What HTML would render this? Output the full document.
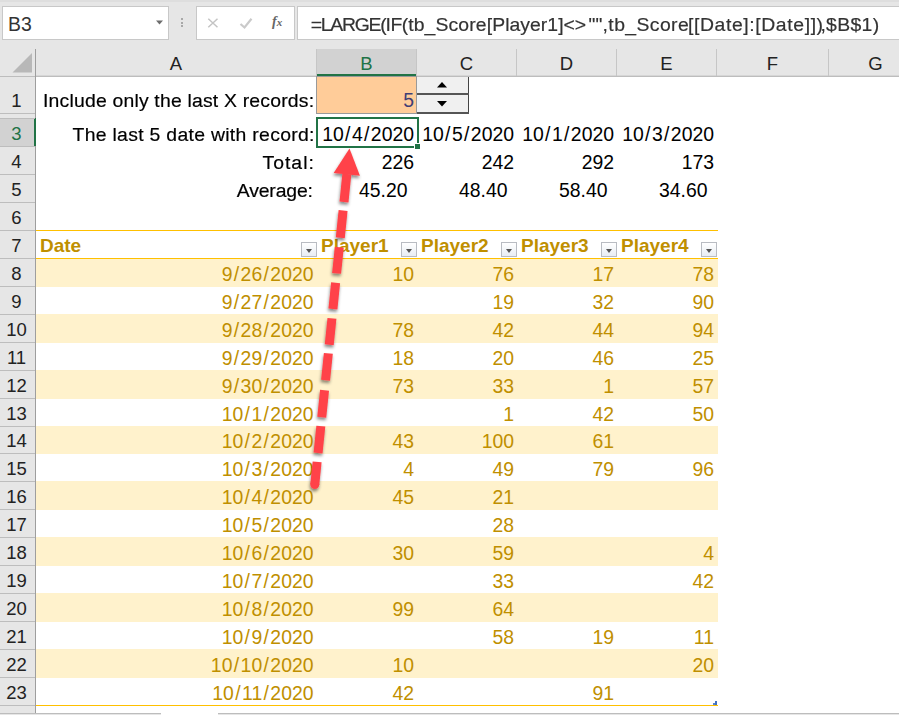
<!DOCTYPE html>
<html><head><meta charset="utf-8"><style>
html,body{margin:0;padding:0;}
body{width:899px;height:715px;overflow:hidden;position:relative;background:#fff;font-family:"Liberation Sans",sans-serif;}
.t{position:absolute;white-space:pre;}
.sl{padding:0 1.4px;}
.dd{position:absolute;width:16px;height:15px;box-sizing:border-box;border:1px solid #b9bcc2;background:linear-gradient(#ffffff,#e9edf3);}
.dd::after{content:"";position:absolute;left:4px;top:5.5px;border-left:3.5px solid transparent;border-right:3.5px solid transparent;border-top:4px solid #555;}
</style></head><body>
<div style="position:absolute;left:0px;top:0px;width:899px;height:49px;background:#e6e6e6;"></div>
<div style="position:absolute;left:0px;top:0px;width:899px;height:2px;background:#dedede;"></div>
<div style="position:absolute;left:2px;top:6px;width:167px;height:34px;background:#fff;border:1px solid #c8c8c8;box-sizing:border-box;"></div>
<div class="t" style="left:8px;top:12.28px;font-size:19.4px;line-height:24px;color:#333;font-weight:normal;letter-spacing:0px;">B3</div>
<svg style="position:absolute;left:155px;top:19px" width="9" height="7"><polygon points="1,1.5 8,1.5 4.5,5.5" fill="#6d6d6d"/></svg>
<div style="position:absolute;left:181px;top:18px;width:2px;height:2px;background:#a8a8a8;"></div>
<div style="position:absolute;left:181px;top:21.6px;width:2px;height:2px;background:#a8a8a8;"></div>
<div style="position:absolute;left:181px;top:25.2px;width:2px;height:2px;background:#a8a8a8;"></div>
<div style="position:absolute;left:196px;top:6px;width:99px;height:34px;background:#fff;border:1px solid #c8c8c8;box-sizing:border-box;"></div>
<svg style="position:absolute;left:206px;top:16px" width="14" height="14"><path d="M2.3,2.8 L11.5,11.2 M11.5,2.8 L2.3,11.2" stroke="#c4c4c4" stroke-width="1.5" fill="none"/></svg>
<svg style="position:absolute;left:238px;top:16px" width="16" height="14"><path d="M2.5,8 L6.5,11.5 L13.5,2.8" stroke="#cacaca" stroke-width="2.2" fill="none"/></svg>
<div style="position:absolute;left:272px;top:11px;font-family:'Liberation Serif',serif;font-style:italic;font-weight:bold;color:#666;white-space:pre;line-height:20px;"><span style="font-size:14px">f</span><span style="font-size:11px;margin-left:0px">x</span></div>
<div style="position:absolute;left:297px;top:6px;width:610px;height:34px;background:#fff;border:1px solid #c8c8c8;box-sizing:border-box;"></div>
<div class="t" style="left:310.7px;top:12.28px;font-size:19.4px;line-height:24px;color:#333;font-weight:normal;letter-spacing:-1.25px;transform:scaleY(0.95);transform-origin:0 18.72px;-webkit-text-stroke:0.2px currentColor;">=LARGE(</div>
<div class="t" style="left:385.5px;top:12.28px;font-size:19.4px;line-height:24px;color:#333;font-weight:normal;letter-spacing:-0.45px;transform:scaleY(0.95);transform-origin:0 18.72px;-webkit-text-stroke:0.2px currentColor;">IF(</div>
<div class="t" style="left:408.2px;top:12.28px;font-size:19.4px;line-height:24px;color:#333;font-weight:normal;letter-spacing:0.114px;transform:scaleY(0.95);transform-origin:0 18.72px;-webkit-text-stroke:0.2px currentColor;">tb_Score</div>
<div class="t" style="left:486.8px;top:12.28px;font-size:19.4px;line-height:24px;color:#333;font-weight:normal;letter-spacing:0.025px;transform:scaleY(0.95);transform-origin:0 18.72px;-webkit-text-stroke:0.2px currentColor;">[Player1]</div>
<div class="t" style="left:563.5px;top:12.28px;font-size:19.4px;line-height:24px;color:#333;font-weight:normal;letter-spacing:0.0px;transform:scaleY(0.95);transform-origin:0 18.72px;-webkit-text-stroke:0.2px currentColor;">&lt;&gt;</div>
<div class="t" style="left:588.6px;top:12.28px;font-size:19.4px;line-height:24px;color:#333;font-weight:normal;letter-spacing:0.0px;transform:scaleY(0.95);transform-origin:0 18.72px;-webkit-text-stroke:0.2px currentColor;">""</div>
<div class="t" style="left:602.6px;top:12.28px;font-size:19.4px;line-height:24px;color:#333;font-weight:normal;letter-spacing:0.388px;transform:scaleY(0.95);transform-origin:0 18.72px;-webkit-text-stroke:0.2px currentColor;">,tb_Score</div>
<div class="t" style="left:687.9px;top:12.28px;font-size:19.4px;line-height:24px;color:#333;font-weight:normal;letter-spacing:0.607px;transform:scaleY(0.95);transform-origin:0 18.72px;-webkit-text-stroke:0.2px currentColor;">[[Date]:[Date]])</div>
<div class="t" style="left:820.4px;top:12.28px;font-size:19.4px;line-height:24px;color:#333;font-weight:normal;letter-spacing:0.32px;transform:scaleY(0.95);transform-origin:0 18.72px;-webkit-text-stroke:0.2px currentColor;">,$B$1)</div>
<div style="position:absolute;left:0px;top:49px;width:899px;height:27px;background:#e6e6e6;"></div>
<div style="position:absolute;left:0px;top:76px;width:899px;height:1px;background:#bdbdbd;"></div>
<div style="position:absolute;left:36px;top:75px;width:863px;height:1px;background:#d6d6d6;"></div>
<svg style="position:absolute;left:0;top:49px" width="35" height="27"><polygon points="12.5,23.5 32,4 32,23.5" fill="#b8b8b8"/></svg>
<div style="position:absolute;left:316px;top:49px;width:101px;height:27px;background:#d2d2d2;"></div>
<div style="position:absolute;left:316px;top:74px;width:101px;height:2px;background:#217346;"></div>
<div style="position:absolute;left:316px;top:49px;width:1px;height:27px;background:#c6c6c6;"></div>
<div class="t" style="left:-74.0px;width:500px;text-align:center;top:52.09px;font-size:18.5px;line-height:24px;color:#222;font-weight:normal;letter-spacing:0px;">A</div>
<div style="position:absolute;left:416px;top:49px;width:1px;height:27px;background:#c6c6c6;"></div>
<div class="t" style="left:116.5px;width:500px;text-align:center;top:52.09px;font-size:18.5px;line-height:24px;color:#217346;font-weight:normal;letter-spacing:0px;">B</div>
<div style="position:absolute;left:516px;top:49px;width:1px;height:27px;background:#c6c6c6;"></div>
<div class="t" style="left:216.5px;width:500px;text-align:center;top:52.09px;font-size:18.5px;line-height:24px;color:#222;font-weight:normal;letter-spacing:0px;">C</div>
<div style="position:absolute;left:616px;top:49px;width:1px;height:27px;background:#c6c6c6;"></div>
<div class="t" style="left:316.5px;width:500px;text-align:center;top:52.09px;font-size:18.5px;line-height:24px;color:#222;font-weight:normal;letter-spacing:0px;">D</div>
<div style="position:absolute;left:716px;top:49px;width:1px;height:27px;background:#c6c6c6;"></div>
<div class="t" style="left:416.5px;width:500px;text-align:center;top:52.09px;font-size:18.5px;line-height:24px;color:#222;font-weight:normal;letter-spacing:0px;">E</div>
<div style="position:absolute;left:828px;top:49px;width:1px;height:27px;background:#c6c6c6;"></div>
<div class="t" style="left:522.5px;width:500px;text-align:center;top:52.09px;font-size:18.5px;line-height:24px;color:#222;font-weight:normal;letter-spacing:0px;">F</div>
<div style="position:absolute;left:940px;top:49px;width:1px;height:27px;background:#c6c6c6;"></div>
<div class="t" style="left:625.5px;width:500px;text-align:center;top:52.09px;font-size:18.5px;line-height:24px;color:#222;font-weight:normal;letter-spacing:0px;">G</div>
<div style="position:absolute;left:35px;top:49px;width:1px;height:27px;background:#9e9e9e;"></div>
<div style="position:absolute;left:0px;top:77px;width:35px;height:638px;background:#e6e6e6;"></div>
<div style="position:absolute;left:35px;top:49px;width:1px;height:666px;background:#9e9e9e;"></div>
<div style="position:absolute;left:0px;top:113px;width:35px;height:1px;background:#bdbdbd;"></div>
<div class="t" style="left:-233.5px;width:500px;text-align:center;top:89.09px;font-size:18.5px;line-height:24px;color:#222;font-weight:normal;letter-spacing:0px;">1</div>
<div style="position:absolute;left:0px;top:119px;width:35px;height:27px;background:#d2d2d2;"></div>
<div style="position:absolute;left:34px;top:118px;width:2px;height:28px;background:#217346;"></div>
<div style="position:absolute;left:0px;top:146px;width:35px;height:1px;background:#bdbdbd;"></div>
<div class="t" style="left:-233.5px;width:500px;text-align:center;top:122.09px;font-size:18.5px;line-height:24px;color:#217346;font-weight:normal;letter-spacing:0px;">3</div>
<div style="position:absolute;left:0px;top:174px;width:35px;height:1px;background:#bdbdbd;"></div>
<div class="t" style="left:-233.5px;width:500px;text-align:center;top:150.09px;font-size:18.5px;line-height:24px;color:#222;font-weight:normal;letter-spacing:0px;">4</div>
<div style="position:absolute;left:0px;top:202px;width:35px;height:1px;background:#bdbdbd;"></div>
<div class="t" style="left:-233.5px;width:500px;text-align:center;top:178.09px;font-size:18.5px;line-height:24px;color:#222;font-weight:normal;letter-spacing:0px;">5</div>
<div style="position:absolute;left:0px;top:230px;width:35px;height:1px;background:#bdbdbd;"></div>
<div class="t" style="left:-233.5px;width:500px;text-align:center;top:206.09px;font-size:18.5px;line-height:24px;color:#222;font-weight:normal;letter-spacing:0px;">6</div>
<div style="position:absolute;left:0px;top:258px;width:35px;height:1px;background:#bdbdbd;"></div>
<div class="t" style="left:-233.5px;width:500px;text-align:center;top:234.09px;font-size:18.5px;line-height:24px;color:#222;font-weight:normal;letter-spacing:0px;">7</div>
<div style="position:absolute;left:0px;top:286px;width:35px;height:1px;background:#bdbdbd;"></div>
<div class="t" style="left:-233.5px;width:500px;text-align:center;top:262.09px;font-size:18.5px;line-height:24px;color:#222;font-weight:normal;letter-spacing:0px;">8</div>
<div style="position:absolute;left:0px;top:314px;width:35px;height:1px;background:#bdbdbd;"></div>
<div class="t" style="left:-233.5px;width:500px;text-align:center;top:290.09px;font-size:18.5px;line-height:24px;color:#222;font-weight:normal;letter-spacing:0px;">9</div>
<div style="position:absolute;left:0px;top:342px;width:35px;height:1px;background:#bdbdbd;"></div>
<div class="t" style="left:-233.5px;width:500px;text-align:center;top:318.09px;font-size:18.5px;line-height:24px;color:#222;font-weight:normal;letter-spacing:0px;">10</div>
<div style="position:absolute;left:0px;top:370px;width:35px;height:1px;background:#bdbdbd;"></div>
<div class="t" style="left:-233.5px;width:500px;text-align:center;top:346.09px;font-size:18.5px;line-height:24px;color:#222;font-weight:normal;letter-spacing:0px;">11</div>
<div style="position:absolute;left:0px;top:398px;width:35px;height:1px;background:#bdbdbd;"></div>
<div class="t" style="left:-233.5px;width:500px;text-align:center;top:374.09px;font-size:18.5px;line-height:24px;color:#222;font-weight:normal;letter-spacing:0px;">12</div>
<div style="position:absolute;left:0px;top:426px;width:35px;height:1px;background:#bdbdbd;"></div>
<div class="t" style="left:-233.5px;width:500px;text-align:center;top:402.09px;font-size:18.5px;line-height:24px;color:#222;font-weight:normal;letter-spacing:0px;">13</div>
<div style="position:absolute;left:0px;top:453px;width:35px;height:1px;background:#bdbdbd;"></div>
<div class="t" style="left:-233.5px;width:500px;text-align:center;top:429.09px;font-size:18.5px;line-height:24px;color:#222;font-weight:normal;letter-spacing:0px;">14</div>
<div style="position:absolute;left:0px;top:481px;width:35px;height:1px;background:#bdbdbd;"></div>
<div class="t" style="left:-233.5px;width:500px;text-align:center;top:457.09px;font-size:18.5px;line-height:24px;color:#222;font-weight:normal;letter-spacing:0px;">15</div>
<div style="position:absolute;left:0px;top:509px;width:35px;height:1px;background:#bdbdbd;"></div>
<div class="t" style="left:-233.5px;width:500px;text-align:center;top:485.09px;font-size:18.5px;line-height:24px;color:#222;font-weight:normal;letter-spacing:0px;">16</div>
<div style="position:absolute;left:0px;top:537px;width:35px;height:1px;background:#bdbdbd;"></div>
<div class="t" style="left:-233.5px;width:500px;text-align:center;top:513.09px;font-size:18.5px;line-height:24px;color:#222;font-weight:normal;letter-spacing:0px;">17</div>
<div style="position:absolute;left:0px;top:565px;width:35px;height:1px;background:#bdbdbd;"></div>
<div class="t" style="left:-233.5px;width:500px;text-align:center;top:541.09px;font-size:18.5px;line-height:24px;color:#222;font-weight:normal;letter-spacing:0px;">18</div>
<div style="position:absolute;left:0px;top:593px;width:35px;height:1px;background:#bdbdbd;"></div>
<div class="t" style="left:-233.5px;width:500px;text-align:center;top:569.09px;font-size:18.5px;line-height:24px;color:#222;font-weight:normal;letter-spacing:0px;">19</div>
<div style="position:absolute;left:0px;top:621px;width:35px;height:1px;background:#bdbdbd;"></div>
<div class="t" style="left:-233.5px;width:500px;text-align:center;top:597.09px;font-size:18.5px;line-height:24px;color:#222;font-weight:normal;letter-spacing:0px;">20</div>
<div style="position:absolute;left:0px;top:649px;width:35px;height:1px;background:#bdbdbd;"></div>
<div class="t" style="left:-233.5px;width:500px;text-align:center;top:625.09px;font-size:18.5px;line-height:24px;color:#222;font-weight:normal;letter-spacing:0px;">21</div>
<div style="position:absolute;left:0px;top:677px;width:35px;height:1px;background:#bdbdbd;"></div>
<div class="t" style="left:-233.5px;width:500px;text-align:center;top:653.09px;font-size:18.5px;line-height:24px;color:#222;font-weight:normal;letter-spacing:0px;">22</div>
<div style="position:absolute;left:0px;top:705px;width:35px;height:1px;background:#bdbdbd;"></div>
<div class="t" style="left:-233.5px;width:500px;text-align:center;top:681.09px;font-size:18.5px;line-height:24px;color:#222;font-weight:normal;letter-spacing:0px;">23</div>
<div style="position:absolute;left:0px;top:118px;width:35px;height:1px;background:#bdbdbd;"></div>
<div style="position:absolute;left:0px;top:713px;width:161px;height:2px;background:#e6e6e6;border-top:1px solid #bdbdbd;box-sizing:border-box;"></div>
<div style="position:absolute;left:218px;top:713px;width:700px;height:2px;background:#e6e6e6;border-top:1px solid #bdbdbd;box-sizing:border-box;"></div>
<div style="position:absolute;left:36px;top:77px;width:863px;height:636px;background:#fff;"></div>
<div style="position:absolute;left:316px;top:76px;width:101px;height:38px;background:#9a9a9a;"></div>
<div style="position:absolute;left:317px;top:77px;width:99px;height:36px;background:#ffcc99;"></div>
<div class="t" style="left:-86px;width:500px;text-align:right;top:88.28px;font-size:19.4px;line-height:24px;color:#3f3f76;font-weight:normal;letter-spacing:0px;">5</div>
<div style="position:absolute;left:417px;top:77px;width:52px;height:36px;background:#f0f0f0;"></div>
<div style="position:absolute;left:468px;top:77px;width:1px;height:37px;background:#444;"></div>
<div style="position:absolute;left:417px;top:112px;width:52px;height:2px;background:#555;"></div>
<div style="position:absolute;left:417px;top:93px;width:52px;height:2px;background:#555;"></div>
<svg style="position:absolute;left:436px;top:81px" width="12" height="8"><polygon points="1,6.5 11,6.5 6,1" fill="#000"/></svg>
<svg style="position:absolute;left:436px;top:100px" width="12" height="8"><polygon points="1,1 11,1 6,6.5" fill="#000"/></svg>
<div class="t" style="left:43px;top:88.28px;font-size:19.4px;line-height:24px;color:#000;font-weight:normal;letter-spacing:0.19px;transform:scaleY(0.94);transform-origin:0 18.72px;-webkit-text-stroke:0.2px currentColor;">Include only the last X records:</div>
<div class="t" style="left:72.5px;top:122.28px;font-size:19.4px;line-height:24px;color:#000;font-weight:normal;letter-spacing:0.3px;transform:scaleY(0.94);transform-origin:0 18.72px;-webkit-text-stroke:0.2px currentColor;">The last 5 date with record:</div>
<div class="t" style="left:262.5px;top:150.28px;font-size:19.4px;line-height:24px;color:#000;font-weight:normal;letter-spacing:1.0px;transform:scaleY(0.94);transform-origin:0 18.72px;-webkit-text-stroke:0.2px currentColor;">Total:</div>
<div class="t" style="left:236.7px;top:178.28px;font-size:19.4px;line-height:24px;color:#000;font-weight:normal;letter-spacing:-0.14px;transform:scaleY(0.94);transform-origin:0 18.72px;-webkit-text-stroke:0.2px currentColor;">Average:</div>
<div class="t" style="left:-86px;width:500px;text-align:right;top:122.28px;font-size:19.4px;line-height:24px;color:#000;font-weight:normal;letter-spacing:0px;">10<span class="sl">/</span>4<span class="sl">/</span>2020</div>
<div class="t" style="left:-86px;width:500px;text-align:right;top:150.28px;font-size:19.4px;line-height:24px;color:#000;font-weight:normal;letter-spacing:0px;">226</div>
<div class="t" style="left:-92.5px;width:500px;text-align:right;top:178.28px;font-size:19.4px;line-height:24px;color:#000;font-weight:normal;letter-spacing:0px;">45.20</div>
<div class="t" style="left:14px;width:500px;text-align:right;top:122.28px;font-size:19.4px;line-height:24px;color:#000;font-weight:normal;letter-spacing:0px;">10<span class="sl">/</span>5<span class="sl">/</span>2020</div>
<div class="t" style="left:14px;width:500px;text-align:right;top:150.28px;font-size:19.4px;line-height:24px;color:#000;font-weight:normal;letter-spacing:0px;">242</div>
<div class="t" style="left:7.5px;width:500px;text-align:right;top:178.28px;font-size:19.4px;line-height:24px;color:#000;font-weight:normal;letter-spacing:0px;">48.40</div>
<div class="t" style="left:114px;width:500px;text-align:right;top:122.28px;font-size:19.4px;line-height:24px;color:#000;font-weight:normal;letter-spacing:0px;">10<span class="sl">/</span>1<span class="sl">/</span>2020</div>
<div class="t" style="left:114px;width:500px;text-align:right;top:150.28px;font-size:19.4px;line-height:24px;color:#000;font-weight:normal;letter-spacing:0px;">292</div>
<div class="t" style="left:107.5px;width:500px;text-align:right;top:178.28px;font-size:19.4px;line-height:24px;color:#000;font-weight:normal;letter-spacing:0px;">58.40</div>
<div class="t" style="left:214px;width:500px;text-align:right;top:122.28px;font-size:19.4px;line-height:24px;color:#000;font-weight:normal;letter-spacing:0px;">10<span class="sl">/</span>3<span class="sl">/</span>2020</div>
<div class="t" style="left:214px;width:500px;text-align:right;top:150.28px;font-size:19.4px;line-height:24px;color:#000;font-weight:normal;letter-spacing:0px;">173</div>
<div class="t" style="left:207.5px;width:500px;text-align:right;top:178.28px;font-size:19.4px;line-height:24px;color:#000;font-weight:normal;letter-spacing:0px;">34.60</div>
<div style="position:absolute;left:316px;top:117px;width:102.5px;height:31px;border:2px solid #217346;box-sizing:border-box;"></div>
<div style="position:absolute;left:415px;top:144px;width:5px;height:5px;background:#217346;border:1px solid #fff;box-sizing:content-box;left:414px;top:143px;"></div>
<div style="position:absolute;left:36px;top:230px;width:682px;height:1px;background:#ffc000;"></div>
<div style="position:absolute;left:36px;top:258px;width:682px;height:1px;background:#ffc000;"></div>
<div style="position:absolute;left:36px;top:258px;width:682px;height:29px;background:#fff2cc;"></div>
<div style="position:absolute;left:36px;top:314px;width:682px;height:29px;background:#fff2cc;"></div>
<div style="position:absolute;left:36px;top:370px;width:682px;height:29px;background:#fff2cc;"></div>
<div style="position:absolute;left:36px;top:426px;width:682px;height:28px;background:#fff2cc;"></div>
<div style="position:absolute;left:36px;top:481px;width:682px;height:29px;background:#fff2cc;"></div>
<div style="position:absolute;left:36px;top:537px;width:682px;height:29px;background:#fff2cc;"></div>
<div style="position:absolute;left:36px;top:593px;width:682px;height:29px;background:#fff2cc;"></div>
<div style="position:absolute;left:36px;top:649px;width:682px;height:29px;background:#fff2cc;"></div>
<div style="position:absolute;left:36px;top:705px;width:682px;height:1px;background:#ffc000;"></div>
<div style="position:absolute;left:36px;top:258px;width:682px;height:1px;background:#ffc000;"></div>
<div class="t" style="left:-186.5px;width:500px;text-align:right;top:262.28px;font-size:19.4px;line-height:24px;color:#bf8f00;font-weight:normal;letter-spacing:0px;">9<span class="sl">/</span>26<span class="sl">/</span>2020</div>
<div class="t" style="left:-86px;width:500px;text-align:right;top:262.28px;font-size:19.4px;line-height:24px;color:#bf8f00;font-weight:normal;letter-spacing:0px;">10</div>
<div class="t" style="left:14px;width:500px;text-align:right;top:262.28px;font-size:19.4px;line-height:24px;color:#bf8f00;font-weight:normal;letter-spacing:0px;">76</div>
<div class="t" style="left:114px;width:500px;text-align:right;top:262.28px;font-size:19.4px;line-height:24px;color:#bf8f00;font-weight:normal;letter-spacing:0px;">17</div>
<div class="t" style="left:214px;width:500px;text-align:right;top:262.28px;font-size:19.4px;line-height:24px;color:#bf8f00;font-weight:normal;letter-spacing:0px;">78</div>
<div class="t" style="left:-186.5px;width:500px;text-align:right;top:290.28px;font-size:19.4px;line-height:24px;color:#bf8f00;font-weight:normal;letter-spacing:0px;">9<span class="sl">/</span>27<span class="sl">/</span>2020</div>
<div class="t" style="left:14px;width:500px;text-align:right;top:290.28px;font-size:19.4px;line-height:24px;color:#bf8f00;font-weight:normal;letter-spacing:0px;">19</div>
<div class="t" style="left:114px;width:500px;text-align:right;top:290.28px;font-size:19.4px;line-height:24px;color:#bf8f00;font-weight:normal;letter-spacing:0px;">32</div>
<div class="t" style="left:214px;width:500px;text-align:right;top:290.28px;font-size:19.4px;line-height:24px;color:#bf8f00;font-weight:normal;letter-spacing:0px;">90</div>
<div class="t" style="left:-186.5px;width:500px;text-align:right;top:318.28px;font-size:19.4px;line-height:24px;color:#bf8f00;font-weight:normal;letter-spacing:0px;">9<span class="sl">/</span>28<span class="sl">/</span>2020</div>
<div class="t" style="left:-86px;width:500px;text-align:right;top:318.28px;font-size:19.4px;line-height:24px;color:#bf8f00;font-weight:normal;letter-spacing:0px;">78</div>
<div class="t" style="left:14px;width:500px;text-align:right;top:318.28px;font-size:19.4px;line-height:24px;color:#bf8f00;font-weight:normal;letter-spacing:0px;">42</div>
<div class="t" style="left:114px;width:500px;text-align:right;top:318.28px;font-size:19.4px;line-height:24px;color:#bf8f00;font-weight:normal;letter-spacing:0px;">44</div>
<div class="t" style="left:214px;width:500px;text-align:right;top:318.28px;font-size:19.4px;line-height:24px;color:#bf8f00;font-weight:normal;letter-spacing:0px;">94</div>
<div class="t" style="left:-186.5px;width:500px;text-align:right;top:346.28px;font-size:19.4px;line-height:24px;color:#bf8f00;font-weight:normal;letter-spacing:0px;">9<span class="sl">/</span>29<span class="sl">/</span>2020</div>
<div class="t" style="left:-86px;width:500px;text-align:right;top:346.28px;font-size:19.4px;line-height:24px;color:#bf8f00;font-weight:normal;letter-spacing:0px;">18</div>
<div class="t" style="left:14px;width:500px;text-align:right;top:346.28px;font-size:19.4px;line-height:24px;color:#bf8f00;font-weight:normal;letter-spacing:0px;">20</div>
<div class="t" style="left:114px;width:500px;text-align:right;top:346.28px;font-size:19.4px;line-height:24px;color:#bf8f00;font-weight:normal;letter-spacing:0px;">46</div>
<div class="t" style="left:214px;width:500px;text-align:right;top:346.28px;font-size:19.4px;line-height:24px;color:#bf8f00;font-weight:normal;letter-spacing:0px;">25</div>
<div class="t" style="left:-186.5px;width:500px;text-align:right;top:374.28px;font-size:19.4px;line-height:24px;color:#bf8f00;font-weight:normal;letter-spacing:0px;">9<span class="sl">/</span>30<span class="sl">/</span>2020</div>
<div class="t" style="left:-86px;width:500px;text-align:right;top:374.28px;font-size:19.4px;line-height:24px;color:#bf8f00;font-weight:normal;letter-spacing:0px;">73</div>
<div class="t" style="left:14px;width:500px;text-align:right;top:374.28px;font-size:19.4px;line-height:24px;color:#bf8f00;font-weight:normal;letter-spacing:0px;">33</div>
<div class="t" style="left:114px;width:500px;text-align:right;top:374.28px;font-size:19.4px;line-height:24px;color:#bf8f00;font-weight:normal;letter-spacing:0px;">1</div>
<div class="t" style="left:214px;width:500px;text-align:right;top:374.28px;font-size:19.4px;line-height:24px;color:#bf8f00;font-weight:normal;letter-spacing:0px;">57</div>
<div class="t" style="left:-186.5px;width:500px;text-align:right;top:402.28px;font-size:19.4px;line-height:24px;color:#bf8f00;font-weight:normal;letter-spacing:0px;">10<span class="sl">/</span>1<span class="sl">/</span>2020</div>
<div class="t" style="left:14px;width:500px;text-align:right;top:402.28px;font-size:19.4px;line-height:24px;color:#bf8f00;font-weight:normal;letter-spacing:0px;">1</div>
<div class="t" style="left:114px;width:500px;text-align:right;top:402.28px;font-size:19.4px;line-height:24px;color:#bf8f00;font-weight:normal;letter-spacing:0px;">42</div>
<div class="t" style="left:214px;width:500px;text-align:right;top:402.28px;font-size:19.4px;line-height:24px;color:#bf8f00;font-weight:normal;letter-spacing:0px;">50</div>
<div class="t" style="left:-186.5px;width:500px;text-align:right;top:429.28px;font-size:19.4px;line-height:24px;color:#bf8f00;font-weight:normal;letter-spacing:0px;">10<span class="sl">/</span>2<span class="sl">/</span>2020</div>
<div class="t" style="left:-86px;width:500px;text-align:right;top:429.28px;font-size:19.4px;line-height:24px;color:#bf8f00;font-weight:normal;letter-spacing:0px;">43</div>
<div class="t" style="left:14px;width:500px;text-align:right;top:429.28px;font-size:19.4px;line-height:24px;color:#bf8f00;font-weight:normal;letter-spacing:0px;">100</div>
<div class="t" style="left:114px;width:500px;text-align:right;top:429.28px;font-size:19.4px;line-height:24px;color:#bf8f00;font-weight:normal;letter-spacing:0px;">61</div>
<div class="t" style="left:-186.5px;width:500px;text-align:right;top:457.28px;font-size:19.4px;line-height:24px;color:#bf8f00;font-weight:normal;letter-spacing:0px;">10<span class="sl">/</span>3<span class="sl">/</span>2020</div>
<div class="t" style="left:-86px;width:500px;text-align:right;top:457.28px;font-size:19.4px;line-height:24px;color:#bf8f00;font-weight:normal;letter-spacing:0px;">4</div>
<div class="t" style="left:14px;width:500px;text-align:right;top:457.28px;font-size:19.4px;line-height:24px;color:#bf8f00;font-weight:normal;letter-spacing:0px;">49</div>
<div class="t" style="left:114px;width:500px;text-align:right;top:457.28px;font-size:19.4px;line-height:24px;color:#bf8f00;font-weight:normal;letter-spacing:0px;">79</div>
<div class="t" style="left:214px;width:500px;text-align:right;top:457.28px;font-size:19.4px;line-height:24px;color:#bf8f00;font-weight:normal;letter-spacing:0px;">96</div>
<div class="t" style="left:-186.5px;width:500px;text-align:right;top:485.28px;font-size:19.4px;line-height:24px;color:#bf8f00;font-weight:normal;letter-spacing:0px;">10<span class="sl">/</span>4<span class="sl">/</span>2020</div>
<div class="t" style="left:-86px;width:500px;text-align:right;top:485.28px;font-size:19.4px;line-height:24px;color:#bf8f00;font-weight:normal;letter-spacing:0px;">45</div>
<div class="t" style="left:14px;width:500px;text-align:right;top:485.28px;font-size:19.4px;line-height:24px;color:#bf8f00;font-weight:normal;letter-spacing:0px;">21</div>
<div class="t" style="left:-186.5px;width:500px;text-align:right;top:513.28px;font-size:19.4px;line-height:24px;color:#bf8f00;font-weight:normal;letter-spacing:0px;">10<span class="sl">/</span>5<span class="sl">/</span>2020</div>
<div class="t" style="left:14px;width:500px;text-align:right;top:513.28px;font-size:19.4px;line-height:24px;color:#bf8f00;font-weight:normal;letter-spacing:0px;">28</div>
<div class="t" style="left:-186.5px;width:500px;text-align:right;top:541.28px;font-size:19.4px;line-height:24px;color:#bf8f00;font-weight:normal;letter-spacing:0px;">10<span class="sl">/</span>6<span class="sl">/</span>2020</div>
<div class="t" style="left:-86px;width:500px;text-align:right;top:541.28px;font-size:19.4px;line-height:24px;color:#bf8f00;font-weight:normal;letter-spacing:0px;">30</div>
<div class="t" style="left:14px;width:500px;text-align:right;top:541.28px;font-size:19.4px;line-height:24px;color:#bf8f00;font-weight:normal;letter-spacing:0px;">59</div>
<div class="t" style="left:214px;width:500px;text-align:right;top:541.28px;font-size:19.4px;line-height:24px;color:#bf8f00;font-weight:normal;letter-spacing:0px;">4</div>
<div class="t" style="left:-186.5px;width:500px;text-align:right;top:569.28px;font-size:19.4px;line-height:24px;color:#bf8f00;font-weight:normal;letter-spacing:0px;">10<span class="sl">/</span>7<span class="sl">/</span>2020</div>
<div class="t" style="left:14px;width:500px;text-align:right;top:569.28px;font-size:19.4px;line-height:24px;color:#bf8f00;font-weight:normal;letter-spacing:0px;">33</div>
<div class="t" style="left:214px;width:500px;text-align:right;top:569.28px;font-size:19.4px;line-height:24px;color:#bf8f00;font-weight:normal;letter-spacing:0px;">42</div>
<div class="t" style="left:-186.5px;width:500px;text-align:right;top:597.28px;font-size:19.4px;line-height:24px;color:#bf8f00;font-weight:normal;letter-spacing:0px;">10<span class="sl">/</span>8<span class="sl">/</span>2020</div>
<div class="t" style="left:-86px;width:500px;text-align:right;top:597.28px;font-size:19.4px;line-height:24px;color:#bf8f00;font-weight:normal;letter-spacing:0px;">99</div>
<div class="t" style="left:14px;width:500px;text-align:right;top:597.28px;font-size:19.4px;line-height:24px;color:#bf8f00;font-weight:normal;letter-spacing:0px;">64</div>
<div class="t" style="left:-186.5px;width:500px;text-align:right;top:625.28px;font-size:19.4px;line-height:24px;color:#bf8f00;font-weight:normal;letter-spacing:0px;">10<span class="sl">/</span>9<span class="sl">/</span>2020</div>
<div class="t" style="left:14px;width:500px;text-align:right;top:625.28px;font-size:19.4px;line-height:24px;color:#bf8f00;font-weight:normal;letter-spacing:0px;">58</div>
<div class="t" style="left:114px;width:500px;text-align:right;top:625.28px;font-size:19.4px;line-height:24px;color:#bf8f00;font-weight:normal;letter-spacing:0px;">19</div>
<div class="t" style="left:214px;width:500px;text-align:right;top:625.28px;font-size:19.4px;line-height:24px;color:#bf8f00;font-weight:normal;letter-spacing:0px;">11</div>
<div class="t" style="left:-186.5px;width:500px;text-align:right;top:653.28px;font-size:19.4px;line-height:24px;color:#bf8f00;font-weight:normal;letter-spacing:0px;">10<span class="sl">/</span>10<span class="sl">/</span>2020</div>
<div class="t" style="left:-86px;width:500px;text-align:right;top:653.28px;font-size:19.4px;line-height:24px;color:#bf8f00;font-weight:normal;letter-spacing:0px;">10</div>
<div class="t" style="left:214px;width:500px;text-align:right;top:653.28px;font-size:19.4px;line-height:24px;color:#bf8f00;font-weight:normal;letter-spacing:0px;">20</div>
<div class="t" style="left:-186.5px;width:500px;text-align:right;top:681.28px;font-size:19.4px;line-height:24px;color:#bf8f00;font-weight:normal;letter-spacing:0px;">10<span class="sl">/</span>11<span class="sl">/</span>2020</div>
<div class="t" style="left:-86px;width:500px;text-align:right;top:681.28px;font-size:19.4px;line-height:24px;color:#bf8f00;font-weight:normal;letter-spacing:0px;">42</div>
<div class="t" style="left:114px;width:500px;text-align:right;top:681.28px;font-size:19.4px;line-height:24px;color:#bf8f00;font-weight:normal;letter-spacing:0px;">91</div>
<div class="t" style="left:40px;top:233.92px;font-size:19px;line-height:24px;color:#bf8f00;font-weight:bold;letter-spacing:0px;">Date</div>
<div class="dd" style="left:301px;top:242px;"></div>
<div class="t" style="left:321px;top:233.92px;font-size:19px;line-height:24px;color:#bf8f00;font-weight:bold;letter-spacing:0px;">Player1</div>
<div class="dd" style="left:401px;top:242px;"></div>
<div class="t" style="left:421px;top:233.92px;font-size:19px;line-height:24px;color:#bf8f00;font-weight:bold;letter-spacing:0px;">Player2</div>
<div class="dd" style="left:501px;top:242px;"></div>
<div class="t" style="left:521px;top:233.92px;font-size:19px;line-height:24px;color:#bf8f00;font-weight:bold;letter-spacing:0px;">Player3</div>
<div class="dd" style="left:601px;top:242px;"></div>
<div class="t" style="left:621px;top:233.92px;font-size:19px;line-height:24px;color:#bf8f00;font-weight:bold;letter-spacing:0px;">Player4</div>
<div class="dd" style="left:701px;top:242px;"></div>
<div style="position:absolute;left:715px;top:701px;width:2px;height:4px;background:#3f6fc0;"></div>
<div style="position:absolute;left:713px;top:703px;width:2px;height:2px;background:#5a84cc;"></div>
<svg style="position:absolute;left:0;top:0" width="899" height="715"><defs><filter id="sh" x="-50%" y="-10%" width="200%" height="120%"><feDropShadow dx="-0.5" dy="2.5" stdDeviation="1.6" flood-color="#000" flood-opacity="0.45"/></filter></defs><g filter="url(#sh)" fill="#ff4349" stroke="none"><polygon points="349.50,148.40 359.94,175.82 333.68,173.11"/><line x1="346.86" y1="173.96" x2="343.97" y2="202.00" stroke="#ff4349" stroke-width="9"/><line x1="343.09" y1="210.50" x2="340.28" y2="237.70" stroke="#ff4349" stroke-width="9"/><line x1="339.30" y1="247.20" x2="336.59" y2="273.40" stroke="#ff4349" stroke-width="9"/><line x1="335.62" y1="282.80" x2="332.92" y2="309.00" stroke="#ff4349" stroke-width="9"/><line x1="331.95" y1="318.40" x2="329.23" y2="344.70" stroke="#ff4349" stroke-width="9"/><line x1="328.34" y1="353.40" x2="325.56" y2="380.30" stroke="#ff4349" stroke-width="9"/><line x1="324.53" y1="390.30" x2="321.75" y2="417.20" stroke="#ff4349" stroke-width="9"/><line x1="320.83" y1="426.10" x2="318.05" y2="453.00" stroke="#ff4349" stroke-width="9"/><line x1="317.13" y1="461.90" x2="314.80" y2="484.50" stroke="#ff4349" stroke-width="9"/><circle cx="314.8" cy="484.5" r="4.5"/></g></svg>
</body></html>
